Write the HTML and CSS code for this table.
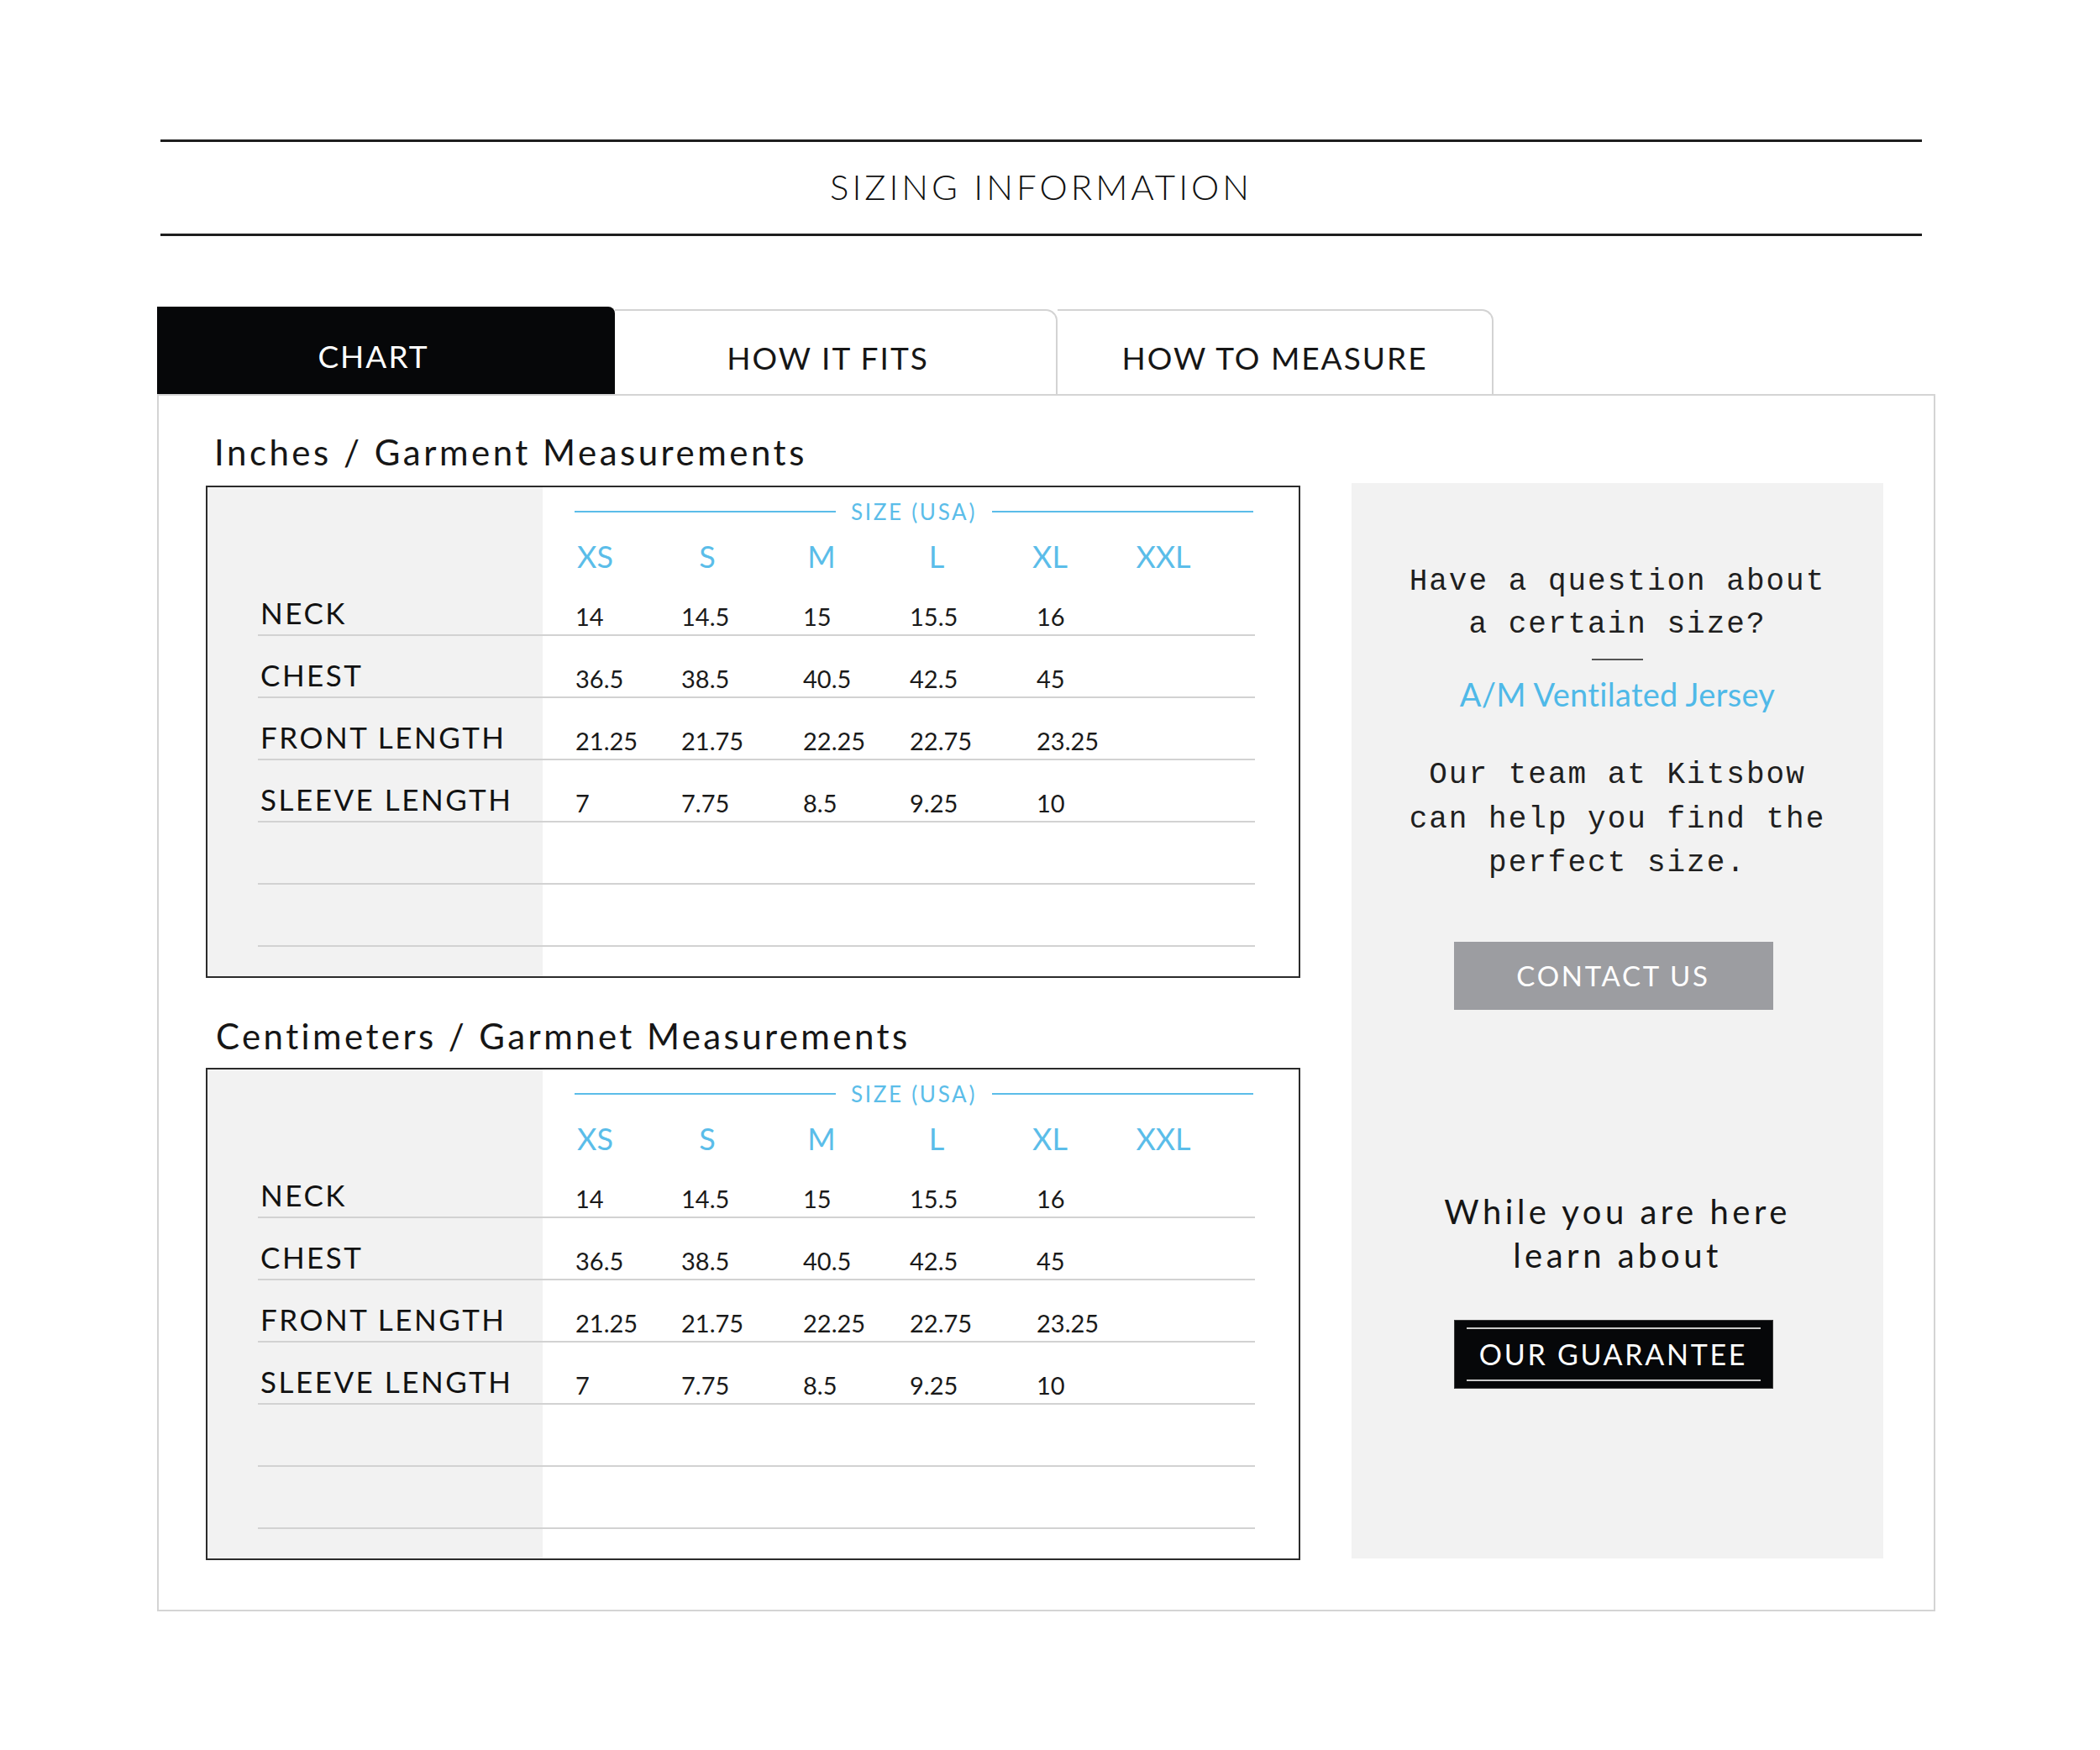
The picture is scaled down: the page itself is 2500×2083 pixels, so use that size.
FILE: index.html
```html
<!DOCTYPE html>
<html lang="en">
<head>
<meta charset="utf-8">
<title>Sizing Information</title>
<link rel="stylesheet" href="styles.css">
</head>
<body>
<div class="page">
  <header class="title-bar"><h1>SIZING INFORMATION</h1></header>

  <nav class="tabs">
    <div class="tab tab-active">CHART</div>
    <div class="tab tab-fits">HOW IT FITS</div>
    <div class="tab tab-measure">HOW TO MEASURE</div>
  </nav>

  <section class="panel">
    <div class="charts">
      <h2 class="chart-title">Inches / Garment Measurements</h2>
      <div class="size-table">
        <div class="size-head">
          <div class="size-caption"><span class="rule"></span><span class="caption-text">SIZE (USA)</span><span class="rule"></span></div>
          <div class="size-names"><span>XS</span><span>S</span><span>M</span><span>L</span><span>XL</span><span>XXL</span></div>
        </div>
        <div class="row"><span class="label">NECK</span><span class="val">14</span><span class="val">14.5</span><span class="val">15</span><span class="val">15.5</span><span class="val">16</span><span class="val"></span></div>
        <div class="row"><span class="label">CHEST</span><span class="val">36.5</span><span class="val">38.5</span><span class="val">40.5</span><span class="val">42.5</span><span class="val">45</span><span class="val"></span></div>
        <div class="row"><span class="label">FRONT LENGTH</span><span class="val">21.25</span><span class="val">21.75</span><span class="val">22.25</span><span class="val">22.75</span><span class="val">23.25</span><span class="val"></span></div>
        <div class="row"><span class="label">SLEEVE LENGTH</span><span class="val">7</span><span class="val">7.75</span><span class="val">8.5</span><span class="val">9.25</span><span class="val">10</span><span class="val"></span></div>
        <div class="row"></div>
        <div class="row"></div>
      </div>

      <h2 class="chart-title chart-title-cm">Centimeters / Garmnet Measurements</h2>
      <div class="size-table">
        <div class="size-head">
          <div class="size-caption"><span class="rule"></span><span class="caption-text">SIZE (USA)</span><span class="rule"></span></div>
          <div class="size-names"><span>XS</span><span>S</span><span>M</span><span>L</span><span>XL</span><span>XXL</span></div>
        </div>
        <div class="row"><span class="label">NECK</span><span class="val">14</span><span class="val">14.5</span><span class="val">15</span><span class="val">15.5</span><span class="val">16</span><span class="val"></span></div>
        <div class="row"><span class="label">CHEST</span><span class="val">36.5</span><span class="val">38.5</span><span class="val">40.5</span><span class="val">42.5</span><span class="val">45</span><span class="val"></span></div>
        <div class="row"><span class="label">FRONT LENGTH</span><span class="val">21.25</span><span class="val">21.75</span><span class="val">22.25</span><span class="val">22.75</span><span class="val">23.25</span><span class="val"></span></div>
        <div class="row"><span class="label">SLEEVE LENGTH</span><span class="val">7</span><span class="val">7.75</span><span class="val">8.5</span><span class="val">9.25</span><span class="val">10</span><span class="val"></span></div>
        <div class="row"></div>
        <div class="row"></div>
      </div>
    </div>

    <aside class="help">
      <p class="mono">Have a question about<br>a certain size?</p>
      <div class="divider"></div>
      <p class="product">A/M Ventilated Jersey</p>
      <p class="mono mono-team">Our team at Kitsbow<br>can help you find the<br>perfect size.</p>
      <div class="btn-contact">CONTACT US</div>
      <p class="while">While you are here<br>learn about</p>
      <div class="btn-guarantee"><span>OUR GUARANTEE</span></div>
    </aside>
  </section>
</div>
</body>
</html>
```

FILE: styles.css
```css
body {
  margin: 0;
  background: #ffffff;
  font-family: Lato, "Noto Sans", sans-serif;
  font-weight: 400;
  color: #161616;
}

.page {
  width: 2117px;
  margin-left: 187px;
  padding-top: 166px;
  padding-bottom: 160px;
}

/* ---------- title ---------- */
.title-bar {
  margin: 0 16px 0 4px;
  border-top: 3px solid #1e1e1e;
  border-bottom: 3px solid #1e1e1e;
  padding: 28px 0 31px;
  text-align: center;
}

.title-bar h1 {
  margin: 0;
  font-weight: 300;
  font-size: 42px;
  line-height: 50px;
  letter-spacing: 4px;
  color: #111111;
}

/* ---------- tabs ---------- */
.tabs {
  display: flex;
  align-items: flex-end;
  margin-top: 84px;
  height: 104px;
}

.tab {
  box-sizing: border-box;
  height: 101px;
  border-top: 2px solid #d3d3d3;
  border-right: 2px solid #d3d3d3;
  border-top-right-radius: 14px;
  display: flex;
  align-items: center;
  justify-content: center;
  padding-top: 12px;
  font-size: 37px;
  letter-spacing: 2px;
  color: #161616;
}

.tab-active {
  width: 545px;
  height: 104px;
  border: none;
  border-top-right-radius: 8px;
  background: #060709;
  color: #ffffff;
  padding-right: 30px;
}

.tab-fits {
  width: 527px;
  padding-right: 18px;
}

.tab-measure { width: 519px; }

/* ---------- panel ---------- */
.panel {
  display: flex;
  border: 2px solid #d4d4d4;
  padding: 42px 60px 59px 56px;
}

.charts {
  width: 1303px;
  flex: none;
}

.chart-title {
  margin: 0 0 15px 10px;
  font-weight: 400;
  font-size: 42px;
  line-height: 50px;
  letter-spacing: 3.5px;
}

.chart-title-cm {
  margin-top: 44px;
  margin-bottom: 13px;
  margin-left: 12px;
  letter-spacing: 3.4px;
}

.size-table {
  border: 2px solid #2b2b2b;
  background: linear-gradient(to right, #f2f2f2 399px, #ffffff 399px);
  padding: 0 52px 35px 60px;
}

.size-head {
  height: 103px;
}

.size-caption {
  display: flex;
  align-items: center;
  margin-left: 377px;
  margin-right: 2px;
  padding-top: 15px;
  height: 28px;
}

.rule {
  flex: 1;
  height: 2px;
  background: #5bbde9;
}

.caption-text {
  margin: 0 18px;
  font-size: 26px;
  line-height: 28px;
  letter-spacing: 2.7px;
  color: #5bbde9;
}

.size-names {
  display: grid;
  grid-template-columns: 133px 134px 138px 136px 134px 136px;
  margin-left: 335px;
  margin-top: 19px;
  font-size: 36px;
  line-height: 40px;
  color: #5bbde9;
  text-align: center;
}

.row {
  box-sizing: border-box;
  height: 74px;
  display: grid;
  grid-template-columns: 378px 126px 145px 127px 151px 124px 1fr;
  align-items: end;
  padding-bottom: 8px;
  border-bottom: 2px solid #d2d2d2;
}

.label {
  font-size: 35px;
  line-height: 35px;
  letter-spacing: 2.5px;
  padding-left: 3px;
  color: #121212;
}

.val {
  font-size: 29px;
  line-height: 29px;
  margin-bottom: -1px;
  color: #1a1a1a;
}

/* ---------- help box ---------- */
.help {
  box-sizing: border-box;
  width: 633px;
  flex: none;
  margin: 62px 0 2px 61px;
  padding-top: 92px;
  background: #f2f2f2;
  display: flex;
  flex-direction: column;
  align-items: center;
  text-align: center;
}

.mono {
  margin: 0;
  font-family: "Liberation Mono", "DejaVu Sans Mono", monospace;
  font-weight: 400;
  font-size: 36px;
  line-height: 51px;
  letter-spacing: 2px;
  color: #1f1f1f;
}

.mono-team {
  margin-top: 48px;
  line-height: 52.5px;
}

.divider {
  width: 61px;
  height: 2px;
  margin-top: 15px;
  background: #555555;
}

.product {
  margin: 17px 0 0;
  font-size: 38px;
  line-height: 46px;
  letter-spacing: 0.3px;
  color: #4fb9e8;
}

.btn-contact {
  width: 380px;
  height: 81px;
  margin-top: 66px;
  margin-right: 10px;
  background: #9c9da1;
  color: #ffffff;
  display: flex;
  align-items: center;
  justify-content: center;
  font-size: 33px;
  letter-spacing: 2.7px;
}

.while {
  margin: 214px 0 0;
  font-size: 40px;
  line-height: 52px;
  letter-spacing: 4.5px;
  color: #161616;
}

.btn-guarantee {
  box-sizing: border-box;
  width: 380px;
  height: 82px;
  margin-top: 51px;
  margin-right: 10px;
  padding: 8px 14px;
  background: #060709;
  border: 1px solid #3a3a3a;
}

.btn-guarantee span {
  display: flex;
  height: 100%;
  box-sizing: border-box;
  align-items: center;
  justify-content: center;
  border-top: 2px solid #c9c9c9;
  border-bottom: 2px solid #c9c9c9;
  color: #ffffff;
  font-size: 34px;
  letter-spacing: 2.7px;
}
```
